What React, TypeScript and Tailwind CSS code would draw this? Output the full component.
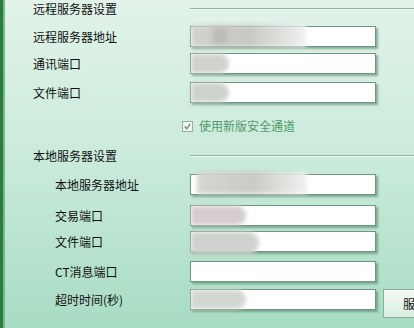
const font = { fontFamily: '"Noto Sans CJK SC", "Noto Sans", sans-serif' };

function Blur({ className }: { className: string }) {
  return <div className={`pointer-events-none absolute blur-[2px] ${className}`} />;
}

function Field({ children }: { children?: React.ReactNode }) {
  return (
    <div className="relative h-[21px] w-[186px] shrink-0 border border-[#6f9682] bg-white shadow-[2px_2px_2px_rgba(70,120,90,0.55)]">
      {children}
    </div>
  );
}

function Header({ label }: { label: string }) {
  return (
    <div className="flex h-[18px] items-center">
      <span className="w-[157px] shrink-0">{label}</span>
      <div className="flex-1">
        <div className="h-px bg-[#8db9a0]" />
        <div className="h-px bg-[#eef8f2]" />
      </div>
    </div>
  );
}

function Row({
  label,
  indent,
  className,
  children,
}: {
  label: string;
  indent?: boolean;
  className: string;
  children?: React.ReactNode;
}) {
  return (
    <div className={`flex items-center ${className}`}>
      <span className={indent ? "w-[157px] shrink-0 pl-[22px]" : "w-[157px] shrink-0"}>{label}</span>
      {children}
    </div>
  );
}

export default function App() {
  return (
    <div
      className="flex h-[328px] w-[414px] overflow-hidden bg-gradient-to-b from-[#e3f3ea] via-[#c9eadb] to-[#a8dcc3] text-[12px] leading-none text-[#101010]"
      style={font}
    >
      <div className="w-[3px] shrink-0 bg-[#2e7a45]" />
      <div className="w-[2px] shrink-0 bg-[#74b98e]" />
      <div className="flex-1 pl-[28px]">
        <Header label="远程服务器设置" />
        <Row label="远程服务器地址" className="mt-[8px]">
          <Field>
            <Blur className="left-0 top-[-2px] h-[22px] w-[115px] bg-gradient-to-r from-[#d3d3cd] via-[#c8c8c3] to-[#f0f2f0]" />
            <Blur className="left-[22px] top-[1px] h-[16px] w-[14px] bg-[#bcbcb8]" />
          </Field>
        </Row>
        <Row label="通讯端口" className="mt-[6px]">
          <Field>
            <Blur className="left-0 top-0 h-[19px] w-[38px] rounded-r-full bg-[#d0d2ce]" />
          </Field>
        </Row>
        <Row label="文件端口" className="mt-[8px]">
          <Field>
            <Blur className="left-0 top-0 h-[19px] w-[38px] rounded-r-full bg-[#cfd1cd]" />
          </Field>
        </Row>
        <div className="mt-[16px] flex h-[14px] items-center pl-[149px]">
          <div className="flex h-[11px] w-[11px] items-center justify-center border border-[#9aaca2] bg-[#eef6f1]">
            <svg viewBox="0 0 10 10" className="h-[9px] w-[9px]">
              <path d="M2 5 L4.2 7.5 L8 2.2" fill="none" stroke="#6f8277" strokeWidth="1.4" />
            </svg>
          </div>
          <span className="ml-[6px] text-[#4f9a68]">使用新版安全通道</span>
        </div>
        <div className="mt-[14px]">
          <Header label="本地服务器设置" />
        </div>
        <Row label="本地服务器地址" indent className="mt-[9px]">
          <Field>
            <Blur className="left-[6px] top-[-3px] h-[22px] w-[110px] bg-gradient-to-r from-[#d6d6d0] via-[#cbcbc5] to-[#eef2ef]" />
          </Field>
        </Row>
        <Row label="交易端口" indent className="mt-[10px]">
          <Field>
            <Blur className="left-0 top-0 h-[19px] w-[55px] rounded-r-full bg-[#d6cdce]" />
          </Field>
        </Row>
        <Row label="文件端口" indent className="mt-[5px]">
          <Field>
            <Blur className="left-0 top-0 h-[22px] w-[68px] rounded-r-full bg-[#cfd2ce]" />
          </Field>
        </Row>
        <Row label="CT消息端口" indent className="mt-[9px]">
          <Field />
        </Row>
        <div className="mt-[7px] flex items-start">
          <span className="flex h-[21px] w-[157px] shrink-0 items-center pl-[22px]">超时时间(秒)</span>
          <Field>
            <Blur className="left-0 top-0 h-[19px] w-[55px] rounded-r-full bg-[#d4d6d2]" />
          </Field>
          <button className="ml-[7px] flex h-[29px] w-[60px] shrink-0 items-center border border-[#93aa9c] bg-gradient-to-b from-[#f4faf6] to-[#d8eee1] pl-[19px] text-[12px] text-[#101010]">
            服务
          </button>
        </div>
      </div>
    </div>
  );
}
